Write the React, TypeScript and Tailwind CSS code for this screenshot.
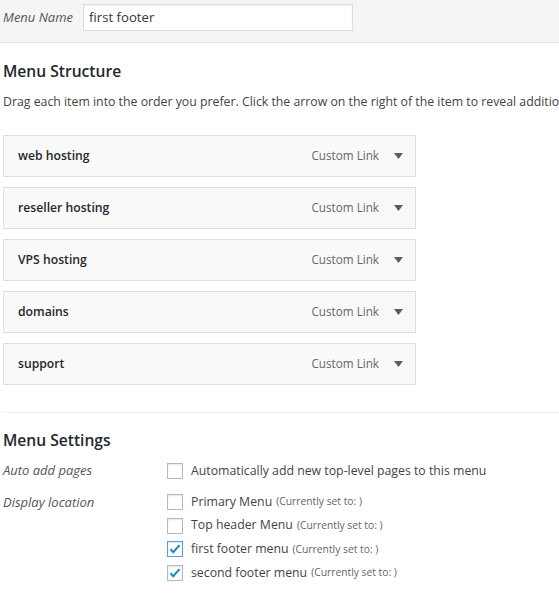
import React from "react";

const items = ["web hosting", "reseller hosting", "VPS hosting", "domains", "support"];

const locations = [
  { name: "Primary Menu", checked: false, focus: false },
  { name: "Top header Menu", checked: false, focus: false },
  { name: "first footer menu", checked: true, focus: true },
  { name: "second footer menu", checked: true, focus: false },
];

const Checkbox = ({ checked, focus }: { checked: boolean; focus?: boolean }) => (
  <span
    className={`flex items-center justify-center w-[16px] h-[16px] bg-white border ${
      focus ? "border-[#5b9dd9] shadow-[0_0_2px_rgba(30,140,190,0.8)]" : "border-[#b4b9be]"
    } shadow-[inset_0_1px_2px_rgba(0,0,0,0.1)]`}
  >
    {checked && (
      <svg width="14" height="14" viewBox="0 0 20 20">
        <path d="M3.5 10.5l4 4L16.5 4.5" fill="none" stroke="#1e8cbe" strokeWidth="3" />
      </svg>
    )}
  </span>
);

export default function App() {
  return (
    <div className="w-[559px] h-[595px] bg-white overflow-hidden font-['Open_Sans',sans-serif] text-[12.3px] text-[#444]">
      <div className="h-[43px] bg-[#f5f5f5] border-b border-[#e2e2e2] flex items-start pt-[4px] pl-[3px]">
        <span className="italic text-[13px] text-[#555] h-[27px] leading-[27px] w-[80px]">Menu Name</span>
        <div className="w-[270px] h-[27px] bg-white border border-[#dddddd] shadow-[inset_0_1px_2px_rgba(0,0,0,0.07)] px-[5px] leading-[25px] text-[13.2px] text-[#32373c]">
          first footer
        </div>
      </div>

      <div className="pl-[3px]">
        <h3 className="mt-[16px] text-[15.6px] leading-[24px] font-semibold text-[#23282d]">Menu Structure</h3>
        <p className="mt-[9px] leading-[20px] whitespace-nowrap overflow-hidden">
          Drag each item into the order you prefer. Click the arrow on the right of the item to reveal additional configuration options.
        </p>

        <div className="mt-[23px] flex flex-col gap-[10px] w-[413px]">
          {items.map((item) => (
            <div
              key={item}
              className="h-[42px] bg-[#f9f9f9] border border-[#dfdfdf] flex items-center pl-[14px] pr-[12px]"
            >
              <span className="font-semibold text-[12.2px] text-[#23282d] flex-1">{item}</span>
              <span className="text-[#666] text-[11.7px] mr-[15px]">Custom Link</span>
              <svg width="9" height="6" viewBox="0 0 9 6">
                <path d="M0 0h9L4.5 6z" fill="#555d66" />
              </svg>
            </div>
          ))}
        </div>
      </div>

      <div className="mt-[27px] ml-[3px] border-t border-[#eeeeee]" />

      <div className="pl-[3px]">
        <h3 className="mt-[15px] text-[15.6px] leading-[24px] font-semibold text-[#23282d]">Menu Settings</h3>

        <div className="mt-[7px] flex h-[24px] items-center">
          <span className="w-[164px] italic text-[13px] text-[#555]">Auto add pages</span>
          <Checkbox checked={false} />
          <span className="ml-[8px]">Automatically add new top-level pages to this menu</span>
        </div>

        <div className="mt-[7px] flex">
          <span className="w-[164px] italic text-[13px] text-[#555] h-[24px] leading-[24px]">Display location</span>
          <div className="flex flex-col">
            {locations.map((loc) => (
              <div key={loc.name} className="flex items-center h-[23.7px]">
                <Checkbox checked={loc.checked} focus={loc.focus} />
                <span className="ml-[8px]">{loc.name}</span>
                <span className="ml-[4px] text-[10.3px] text-[#666]">(Currently set to: )</span>
              </div>
            ))}
          </div>
        </div>
      </div>
    </div>
  );
}
